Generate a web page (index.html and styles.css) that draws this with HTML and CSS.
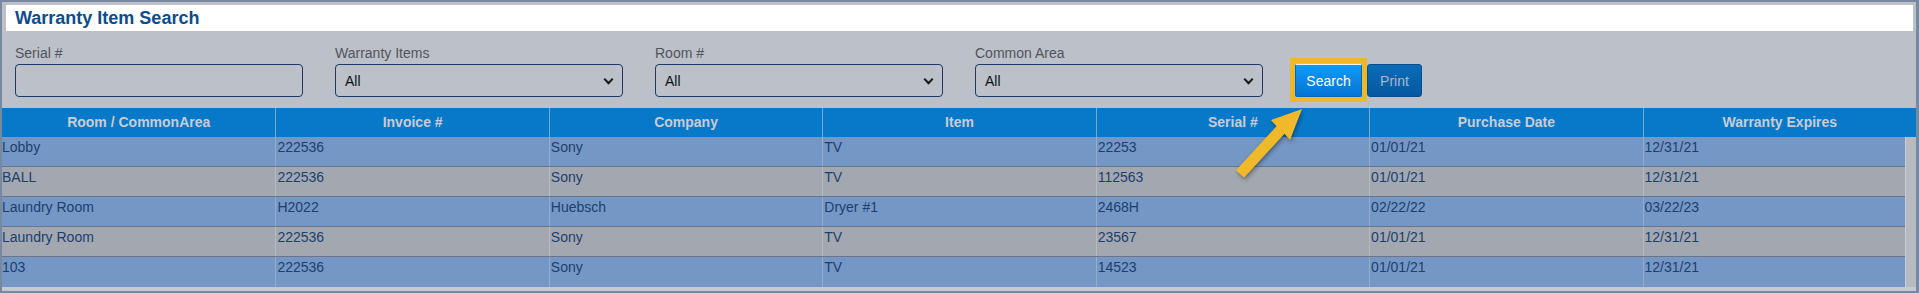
FILE: index.html
```html
<!DOCTYPE html>
<html>
  <head>
    <meta charset="utf-8" />
    <title>Warranty Item Search</title>
    <link rel="stylesheet" href="styles.css">
  </head>
  <body>
    <div class="panel">
      <div class="title-bar">
        <h1>Warranty Item Search</h1>
      </div>

      <form class="filters">
        <label class="field">
          <span class="field-label">Serial #</span>
          <input class="control" type="text" name="serial" />
        </label>
        <label class="field">
          <span class="field-label">Warranty Items</span>
          <span class="select-wrap"><select class="control" name="item"><option>All</option></select></span>
        </label>
        <label class="field">
          <span class="field-label">Room #</span>
          <span class="select-wrap"><select class="control" name="room"><option>All</option></select></span>
        </label>
        <label class="field">
          <span class="field-label">Common Area</span>
          <span class="select-wrap"><select class="control" name="area"><option>All</option></select></span>
        </label>
        <div class="actions">
          <span class="highlight"><button class="btn btn-search" type="button">Search</button></span>
          <button class="btn btn-print" type="button">Print</button>
        </div>
      </form>

      <div class="grid">
        <div class="grid-head">
          <div class="th">Room / CommonArea</div>
          <div class="th">Invoice #</div>
          <div class="th">Company</div>
          <div class="th">Item</div>
          <div class="th">Serial #</div>
          <div class="th">Purchase Date</div>
          <div class="th">Warranty Expires</div>
        </div>
        <div class="grid-body">
          <div class="rows">
            <div class="row">
              <div class="td">Lobby</div><div class="td">222536</div><div class="td">Sony</div><div class="td">TV</div><div class="td">22253</div><div class="td">01/01/21</div><div class="td">12/31/21</div>
            </div>
            <div class="row">
              <div class="td">BALL</div><div class="td">222536</div><div class="td">Sony</div><div class="td">TV</div><div class="td">112563</div><div class="td">01/01/21</div><div class="td">12/31/21</div>
            </div>
            <div class="row">
              <div class="td">Laundry Room</div><div class="td">H2022</div><div class="td">Huebsch</div><div class="td">Dryer #1</div><div class="td">2468H</div><div class="td">02/22/22</div><div class="td">03/22/23</div>
            </div>
            <div class="row">
              <div class="td">Laundry Room</div><div class="td">222536</div><div class="td">Sony</div><div class="td">TV</div><div class="td">23567</div><div class="td">01/01/21</div><div class="td">12/31/21</div>
            </div>
            <div class="row">
              <div class="td">103</div><div class="td">222536</div><div class="td">Sony</div><div class="td">TV</div><div class="td">14523</div><div class="td">01/01/21</div><div class="td">12/31/21</div>
            </div>
          </div>
          <div class="scroll-track"></div>
        </div>
      </div>

      <!-- callout pointing at the Search button -->
      <svg class="callout-arrow" width="90" height="90" viewBox="0 0 90 90">
        <polygon points="77,9 65,40 59.5,33.8 19,77.8 11,70.2 51.5,26.2 46,20" fill="#f0b92a" />
      </svg>
    </div>
  </body>
</html>
```

FILE: styles.css
```css
html {
  margin: 0px;
  padding: 0px;
}
body {
  font-family: 'Liberation Sans', Arial, Helvetica, sans-serif;
  margin: 0px;
  padding: 0px;
  background-color: #bcc0c8;
}
.panel {
  position: relative;
  box-sizing: border-box;
  width: 1919px;
  height: 293px;
  border: 2px solid #7689a0;
  border-right-width: 3px;
  background-color: #bcc0c8;
  overflow: hidden;
}
.title-bar {
  margin: 3px 3px 0px 4px;
  height: 26px;
  background-color: #ffffff;
}
.title-bar h1 {
  margin: 0px;
  padding-left: 9px;
  font-size: 18px;
  line-height: 26px;
  font-weight: bold;
  color: #0c4c8e;
}
.filters {
  display: flex;
  align-items: flex-end;
  gap: 32px;
  margin: 0px;
  padding: 14px 0px 0px 13px;
}
.field {
  display: flex;
  flex-direction: column;
  width: 288px;
}
.field-label {
  font-size: 14px;
  line-height: 16px;
  color: #50555f;
  margin-bottom: 3px;
}
.control {
  box-sizing: border-box;
  width: 100%;
  height: 33px;
  margin: 0px;
  padding: 0px 9px;
  border: 1px solid #1b3a6b;
  border-radius: 4px;
  background-color: transparent;
  font-family: inherit;
  font-size: 14px;
  color: #111111;
  -webkit-appearance: none;
  appearance: none;
}
.select-wrap {
  position: relative;
  display: block;
}
.select-wrap::after {
  content: '';
  position: absolute;
  right: 11px;
  top: 12px;
  width: 5px;
  height: 5px;
  border-right: 2px solid #1a1a1a;
  border-bottom: 2px solid #1a1a1a;
  transform: rotate(45deg);
  pointer-events: none;
}
.actions {
  display: flex;
  align-items: flex-end;
  margin-left: -5px;
}
.highlight {
  display: flex;
  padding-top: 1px;
  border: 5px solid #efb828;
  margin-bottom: -5px;
}
.btn {
  box-sizing: border-box;
  height: 33px;
  padding: 0px;
  border-radius: 3px;
  font-family: inherit;
  font-size: 14px;
}
.btn-search {
  width: 67px;
  color: #ffffff;
  border: 1px solid #0866bb;
  border-top-color: #eaf4ff;
  border-radius: 2px;
  background: linear-gradient(#119af4, #0574d6);
}
.btn-print {
  width: 55px;
  color: #a9b9cd;
  border: 1px solid #0a4c8a;
  background: linear-gradient(#0a6cb8, #0558a0);
}
.grid {
  margin-top: 11px;
}
.grid-head {
  display: grid;
  grid-template-columns: repeat(7, 1fr);
  height: 29px;
  background-color: #0878c9;
}
.th {
  font-size: 14px;
  line-height: 29px;
  font-weight: bold;
  text-align: center;
  color: #c6cdd8;
  border-left: 1px solid #78a8d2;
}
.th:first-child {
  border-left: none;
}
.grid-body {
  display: flex;
  height: 154px;
  background-color: #c6c9cf;
}
.rows {
  flex: 1;
  height: 150px;
}
.row {
  box-sizing: border-box;
  display: grid;
  grid-template-columns: repeat(6, 273.43px) 1fr;
  height: 30px;
  border-bottom: 1px solid #6b7585;
  background-color: #7597c5;
}
.row:nth-child(2n) {
  background-color: #a3a7af;
}
.row:last-child {
  border-bottom: none;
}
.td {
  padding: 2px 0px 0px 1px;
  font-size: 14px;
  line-height: 16px;
  color: #1c3f6f;
  border-left: 1px solid rgba(255, 255, 255, 0.22);
}
.td:first-child {
  padding-left: 0px;
  border-left: none;
}
.scroll-track {
  box-sizing: border-box;
  width: 11px;
  height: 150px;
  background-color: #b6bac1;
  border-left: 1px solid #c9ccd2;
}
.callout-arrow {
  position: absolute;
  left: 1223px;
  top: 98px;
  filter: drop-shadow(1px 2px 2px rgba(0, 0, 0, 0.4));
}
```
